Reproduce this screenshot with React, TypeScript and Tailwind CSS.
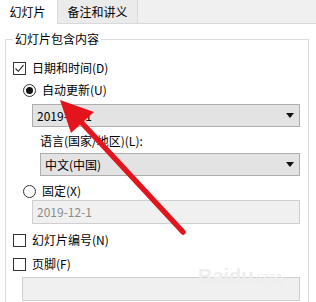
import React from 'react';

const font = { fontFamily: '"Noto Sans CJK SC", "Microsoft YaHei", sans-serif' };

const CheckBox: React.FC<{ checked?: boolean; label: string }> = ({ checked, label }) => (
  <div className="flex items-center h-[16px] ml-[7px]">
    <span className="w-[13px] h-[13px] border border-[#333] bg-white flex items-center justify-center">
      {checked && (
        <svg width="11" height="11" viewBox="0 0 11 11">
          <path d="M1.5 5.5 L4.3 8.3 L9.5 2.2" fill="none" stroke="#222" strokeWidth="1.1" />
        </svg>
      )}
    </span>
    <span className="ml-[6px]">{label}</span>
  </div>
);

const Radio: React.FC<{ checked?: boolean; label: string }> = ({ checked, label }) => (
  <div className="flex items-center h-[16px] ml-[17px]">
    <span className="w-[13px] h-[13px] rounded-full border border-[#333] bg-white flex items-center justify-center">
      {checked && <span className="w-[7px] h-[7px] rounded-full bg-[#111]" />}
    </span>
    <span className="ml-[6px]">{label}</span>
  </div>
);

const Select: React.FC<{ value: string; className: string }> = ({ value, className }) => (
  <div className={`h-[23px] bg-[#e3e3e3] border border-[#adadad] flex items-center justify-between pl-[4px] pr-[5px] ${className}`}>
    <span>{value}</span>
    <svg width="8" height="5" viewBox="0 0 8 5">
      <path d="M0 0 L8 0 L4 5 Z" fill="#111" />
    </svg>
  </div>
);

export default function App() {
  return (
    <div className="relative w-[316px] h-[302px] overflow-hidden bg-white text-[12px] text-black" style={font}>
      {/* tabs */}
      <div className="flex h-[24px] bg-[#f0f0f0] border-b border-[#d9d9d9]">
        <div className="w-[57px] h-[24px] bg-white flex items-center justify-center -mb-px pr-[2px]">幻灯片</div>
        <div className="w-[81px] bg-[#ebebeb] border-x border-[#d9d9d9] flex items-center justify-center">备注和讲义</div>
      </div>

      <div className="pt-[7px] pl-[5px] pr-[7px]">
        <fieldset className="border border-[#dcdcdc] pr-[8px] pb-[20px] flex flex-col">
          <legend className="ml-[7px] px-[2px] leading-[16px]">幻灯片包含内容</legend>
          <div className="mt-[13px]">
            <CheckBox checked label="日期和时间(D)" />
          </div>
          <div className="mt-[6px]">
            <Radio checked label="自动更新(U)" />
          </div>
          <Select value="2019-12-1" className="mt-[6px] ml-[26px]" />
          <div className="mt-[6px] ml-[34px] h-[16px] leading-[16px]">语言(国家/地区)(L):</div>
          <Select value="中文(中国)" className="mt-[4px] ml-[34px]" />
          <div className="mt-[7px]">
            <Radio label="固定(X)" />
          </div>
          <div className="mt-[1px] ml-[26px] h-[24px] bg-[#f0f0f0] border border-[#cfcfcf] flex items-center pl-[4px] text-[#8a8a8a]">
            2019-12-1
          </div>
          <div className="mt-[8px]">
            <CheckBox label="幻灯片编号(N)" />
          </div>
          <div className="mt-[8px]">
            <CheckBox label="页脚(F)" />
          </div>
          <div className="mt-[5px] ml-[16px] h-[24px] bg-[#f0f0f0] border border-[#cfcfcf]" />
        </fieldset>
      </div>

      {/* watermark */}
      <div className="absolute left-[198px] top-[266px] flex items-end gap-[2px] text-[#eeeeee] pointer-events-none">
        <span className="text-[20px] font-bold leading-none" style={{ fontFamily: '"Liberation Sans", sans-serif' }}>Baidu</span>
        <span className="text-[14px] leading-none">经验</span>
      </div>

      {/* red arrow */}
      <svg className="absolute left-0 top-0 pointer-events-none" width="316" height="302" viewBox="0 0 316 302">
        <line x1="183" y1="232" x2="82" y2="123" stroke="#e3141b" strokeWidth="5.5" strokeLinecap="round" />
        <polygon points="60,100 71,133 94,112" fill="#e3141b" />
      </svg>
    </div>
  );
}
